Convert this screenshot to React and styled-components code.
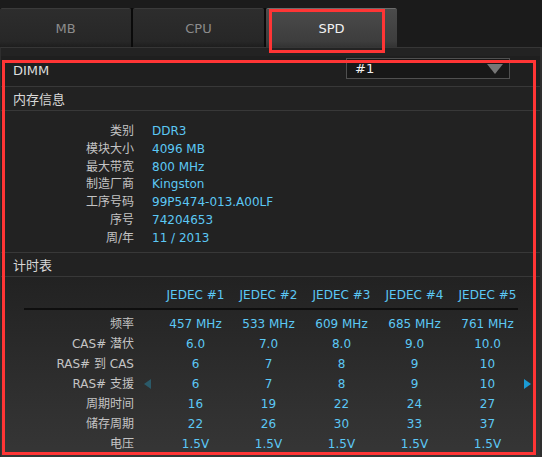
import { Fragment } from "react";
import styled, { createGlobalStyle } from "styled-components";

const GlobalStyle = createGlobalStyle`
  html, body {
    margin: 0;
    padding: 0;
    background: #1b1b1b;
  }
`;

const Page = styled.div`
  position: relative;
  width: 542px;
  height: 457px;
  overflow: hidden;
  background: #1b1b1b;
  font-family: "DejaVu Sans", "Noto Sans CJK SC", sans-serif;
  font-size: 12px;
  color: #c8c8c8;
`;

const TabBar = styled.div`
  height: 39px;
  padding-top: 8px;
`;

const TabRow = styled.div`
  display: flex;
  gap: 2px;
  width: fit-content;
  height: 39px;
  background: #0a0a0a;
`;

const Tab = styled.div`
  width: 131px;
  height: 39px;
  box-sizing: border-box;
  display: flex;
  align-items: center;
  justify-content: center;
  font-size: 13px;
  border-top: 1px solid ${(p) => (p.$active ? "#6c6c6c" : "#3a3a3a")};
  border-radius: 2px 2px 0 0;
  color: ${(p) => (p.$active ? "#f2f2f2" : "#8c8c8c")};
  background: ${(p) =>
    p.$active
      ? "linear-gradient(#4b4b4b, #3d3d3d 85%, #333333)"
      : "linear-gradient(#2d2d2d, #272727 85%, #1e1e1e)"};
`;

const Panel = styled.div`
  height: 409px;
  border-top: 1px solid #363636;
  border-left: 1px solid #2e2e2e;
  border-right: 2px solid #2e2e2e;
  background: #232323;
  display: flex;
  flex-direction: column;
`;

const DimmRow = styled.div`
  height: 39px;
  box-sizing: border-box;
  display: flex;
  align-items: flex-start;
  padding: 10px 0 0 12px;
  background: linear-gradient(#232323 0, #232323 8px, #1f1f1f 8px);
  border-bottom: 1px solid #383838;
`;

const DimmLabel = styled.div`
  flex: 1;
  font-size: 13px;
  line-height: 21px;
  padding-top: 2px;
  color: #dcdcdc;
`;

const Select = styled.div`
  width: 164px;
  height: 21px;
  box-sizing: border-box;
  margin-right: 30px;
  display: flex;
  align-items: center;
  justify-content: space-between;
  padding: 0 6px 0 8px;
  background: #181818;
  border: 1px solid #505050;
  color: #f0f0f0;
  font-size: 13px;
`;

const Caret = styled.span`
  width: 0;
  height: 0;
  border-left: 8px solid transparent;
  border-right: 8px solid transparent;
  border-top: 10px solid #767676;
`;

const SectionHeader = styled.div`
  height: 23px;
  display: flex;
  align-items: center;
  padding-left: 12px;
  font-size: 13px;
  color: #d8d8d8;
  background: #222222;
  border-bottom: 1px solid #383838;
`;

const InfoBlock = styled.div`
  height: 142px;
  box-sizing: border-box;
  padding-top: 12px;
  background: #222222;
  border-bottom: 1px solid #383838;
  display: grid;
  grid-template-columns: 133px 1fr;
  grid-auto-rows: 17.8px;
  column-gap: 18px;
  align-content: start;
`;

const InfoLabel = styled.div`
  text-align: right;
  line-height: 17.8px;
  color: #c4c4c4;
`;

const Value = styled.div`
  line-height: ${(p) => p.$lh || "17.8px"};
  color: #5cc8f5;
  text-align: ${(p) => (p.$center ? "center" : "left")};
`;

const TimingBlock = styled.div`
  flex: 1;
  padding-top: 8px;
  background: linear-gradient(#222222, #363636);
`;

const TimingGrid = styled.div`
  display: grid;
  grid-template-columns: 133px 25px repeat(5, 73px) 12px;
  grid-auto-rows: 20px;
  align-items: center;
`;

const HeaderCell = styled.div`
  text-align: center;
  line-height: 20px;
  color: #5cc8f5;
`;

const Rule = styled.div`
  margin: 3px 0 4px 23px;
  width: 494px;
  height: 2px;
  background: #0e0e0e;
`;

const TimingLabel = styled.div`
  text-align: right;
  line-height: 20px;
  color: #c4c4c4;
`;

const Arrow = styled.span`
  justify-self: start;
  margin-left: ${(p) => (p.$right ? "0" : "10px")};
  width: 0;
  height: 0;
  border-top: 5px solid transparent;
  border-bottom: 5px solid transparent;
  ${(p) =>
    p.$right
      ? "border-left: 7px solid #1b9ad4;"
      : "border-right: 7px solid #2b5a69;"}
`;

const Highlight = styled.div`
  position: absolute;
  left: ${(p) => p.$x}px;
  top: ${(p) => p.$y}px;
  width: ${(p) => p.$w}px;
  height: ${(p) => p.$h}px;
  box-sizing: border-box;
  border: 3px solid #ff3535;
  pointer-events: none;
`;

const info = [
  ["类别", "DDR3"],
  ["模块大小", "4096 MB"],
  ["最大带宽", "800 MHz"],
  ["制造厂商", "Kingston"],
  ["工序号码", "99P5474-013.A00LF"],
  ["序号", "74204653"],
  ["周/年", "11 / 2013"],
];

const jedec = ["JEDEC #1", "JEDEC #2", "JEDEC #3", "JEDEC #4", "JEDEC #5"];

const timings = [
  ["频率", ["457 MHz", "533 MHz", "609 MHz", "685 MHz", "761 MHz"]],
  ["CAS# 潜伏", ["6.0", "7.0", "8.0", "9.0", "10.0"]],
  ["RAS# 到 CAS", ["6", "7", "8", "9", "10"]],
  ["RAS# 支援", ["6", "7", "8", "9", "10"], true],
  ["周期时间", ["16", "19", "22", "24", "27"]],
  ["储存周期", ["22", "26", "30", "33", "37"]],
  ["电压", ["1.5V", "1.5V", "1.5V", "1.5V", "1.5V"]],
];

export default function App() {
  return (
    <Page>
      <GlobalStyle />
      <TabBar>
        <TabRow>
          <Tab>MB</Tab>
          <Tab>CPU</Tab>
          <Tab $active>SPD</Tab>
        </TabRow>
      </TabBar>
      <Panel>
        <DimmRow>
          <DimmLabel>DIMM</DimmLabel>
          <Select>
            <span>#1</span>
            <Caret />
          </Select>
        </DimmRow>
        <SectionHeader>内存信息</SectionHeader>
        <InfoBlock>
          {info.map(([label, value]) => (
            <Fragment key={label}>
              <InfoLabel>{label}</InfoLabel>
              <Value>{value}</Value>
            </Fragment>
          ))}
        </InfoBlock>
        <SectionHeader>计时表</SectionHeader>
        <TimingBlock>
          <TimingGrid>
            <div />
            <div />
            {jedec.map((j) => (
              <HeaderCell key={j}>{j}</HeaderCell>
            ))}
            <div />
          </TimingGrid>
          <Rule />
          <TimingGrid>
            {timings.map(([label, values, arrows]) => (
              <Fragment key={label}>
                <TimingLabel>{label}</TimingLabel>
                {arrows ? <Arrow /> : <div />}
                {values.map((v, i) => (
                  <Value key={i} $center $lh="20px">
                    {v}
                  </Value>
                ))}
                {arrows ? <Arrow $right /> : <div />}
              </Fragment>
            ))}
          </TimingGrid>
        </TimingBlock>
      </Panel>
      <Highlight $x={269} $y={9} $w={116} $h={44} />
      <Highlight $x={2} $y={60} $w={534} $h={395} />
    </Page>
  );
}
